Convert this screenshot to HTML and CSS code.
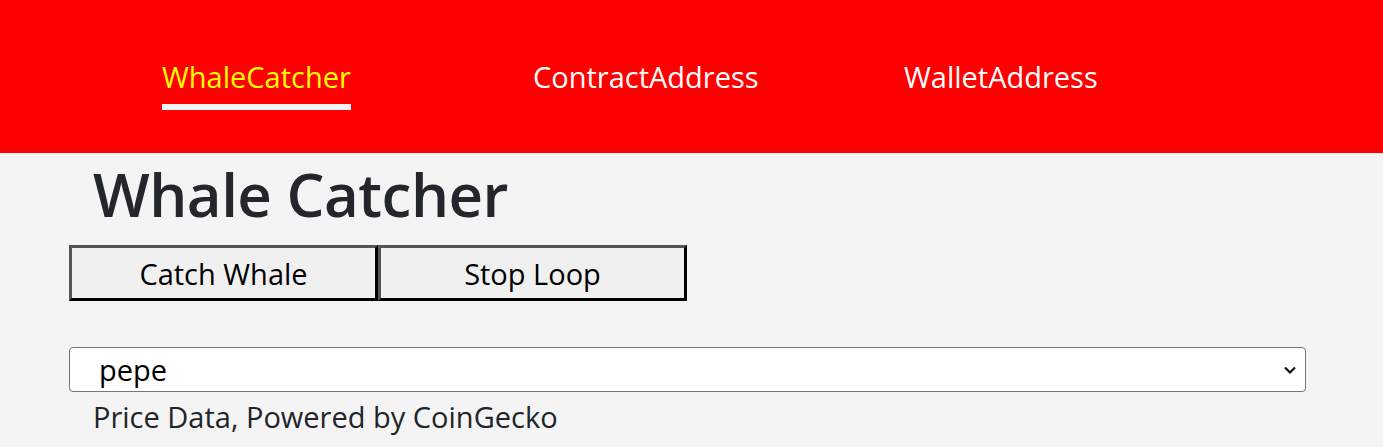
FILE: index.html
```html
<!DOCTYPE html>
<html lang="en">
<head>
<meta charset="utf-8">
<title>Whale Catcher</title>
<link rel="stylesheet" href="styles.css">
</head>
<body>
<header class="topbar">
  <nav class="nav">
    <a class="nav-item active" href="#">WhaleCatcher</a>
    <a class="nav-item" href="#">ContractAddress</a>
    <a class="nav-item" href="#">WalletAddress</a>
  </nav>
</header>
<main class="content">
  <h1 class="title">Whale Catcher</h1>
  <div class="actions">
    <button class="btn" type="button">Catch Whale</button>
    <button class="btn" type="button">Stop Loop</button>
  </div>
  <div class="select-wrap">
    <select class="coin-select">
      <option>pepe</option>
    </select>
    <svg class="chevron" width="14" height="10" viewBox="0 0 14 10"><path d="M2 2.5 L7 7.5 L12 2.5" fill="none" stroke="#111" stroke-width="2.2"/></svg>
  </div>
  <p class="credit">Price Data, Powered by CoinGecko</p>
</main>
</body>
</html>
```

FILE: styles.css
```css
html, body {
  margin: 0;
  padding: 0;
  background: #f4f4f4;
  font-family: "Open Sans", "Noto Sans", sans-serif;
  color: #212529;
}

.topbar {
  background: #ff0000;
  height: 153px;
  box-sizing: border-box;
  padding-left: 162px;
}

.nav {
  display: flex;
  align-items: flex-start;
  padding-top: 56px;
}

.nav-item {
  width: 371px;
  flex: none;
  text-decoration: none;
  color: #ffffff;
  font-size: 29px;
  line-height: 42px;
}

.nav-item.active {
  color: #ffff00;
}

.nav-item.active::after {
  content: "";
  display: block;
  width: 189px;
  height: 6px;
  margin-top: 6px;
  background: #f4f4f4;
}

.content {
  padding: 0 0 0 69px;
}

.title {
  margin: 0;
  padding: 1px 0 0 24px;
  font-size: 60px;
  font-weight: 600;
  line-height: 80px;
  letter-spacing: -0.5px;
  color: #23272b;
}

.actions {
  display: flex;
  margin-top: 11px;
}

.btn {
  width: 309px;
  height: 56px;
  box-sizing: border-box;
  margin: 0;
  border: 3px solid;
  border-color: #555555 #000000 #000000 #555555;
  background: #f0f0f0;
  font-family: inherit;
  font-size: 29px;
  color: #000;
  padding: 0;
}

.select-wrap {
  position: relative;
  width: 1237px;
  margin-top: 46px;
}

.coin-select {
  appearance: none;
  -webkit-appearance: none;
  width: 100%;
  height: 45px;
  box-sizing: border-box;
  border: 1px solid #767676;
  border-radius: 4px;
  background: #ffffff;
  font-family: inherit;
  font-size: 29px;
  color: #000;
  padding: 0 0 0 29px;
  line-height: 43px;
}

.chevron {
  position: absolute;
  right: 9px;
  top: 18px;
  pointer-events: none;
}

.credit {
  margin: 0;
  padding-left: 24px;
  font-size: 29px;
  line-height: 50px;
  color: #212529;
}
```
